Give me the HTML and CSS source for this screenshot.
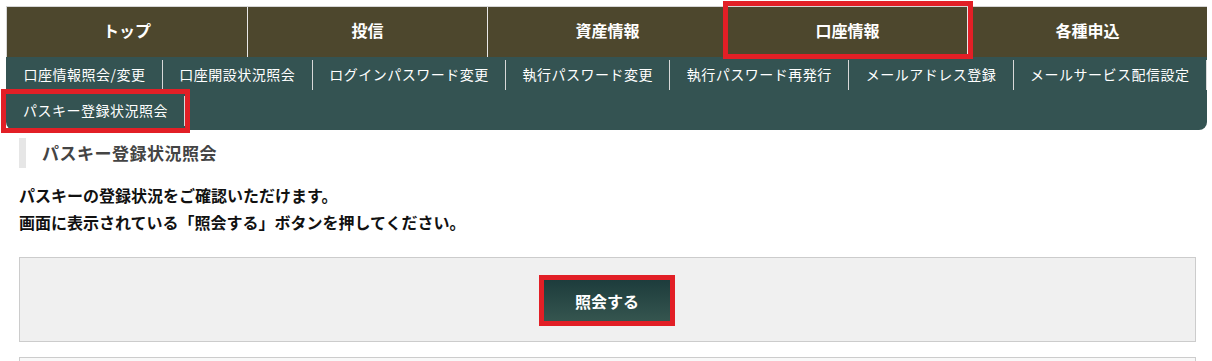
FILE: index.html
```html
<!DOCTYPE html>
<html lang="ja">
<head>
<meta charset="utf-8">
<title>パスキー登録状況照会</title>
<link rel="stylesheet" href="styles.css">
</head>
<body>
<div class="page">
  <nav class="gnav">
    <a class="gnav-item">トップ</a>
    <a class="gnav-item">投信</a>
    <a class="gnav-item">資産情報</a>
    <a class="gnav-item hl hl-gnav">口座情報</a>
    <a class="gnav-item">各種申込</a>
  </nav>
  <nav class="snav">
    <a class="snav-item snav-fill">口座情報照会/変更</a>
    <a class="snav-item snav-fill">口座開設状況照会</a>
    <a class="snav-item snav-fill">ログインパスワード変更</a>
    <a class="snav-item snav-fill">執行パスワード変更</a>
    <a class="snav-item snav-fill">執行パスワード再発行</a>
    <a class="snav-item snav-fill">メールアドレス登録</a>
    <a class="snav-item snav-fill">メールサービス配信設定</a>
    <a class="snav-item snav-last hl hl-snav">パスキー登録状況照会</a>
  </nav>
  <main class="content">
    <h2 class="heading">パスキー登録状況照会</h2>
    <p class="lead">パスキーの登録状況をご確認いただけます。<br>画面に表示されている「照会する」ボタンを押してください。</p>
    <div class="panel">
      <button class="btn hl hl-btn" type="button">照会する</button>
    </div>
    <div class="panel2"></div>
  </main>
</div>
</body>
</html>
```

FILE: styles.css
```css
* { box-sizing: border-box; }
html, body { margin: 0; padding: 0; background: #fff; }
body {
  font-family: "Noto Sans CJK JP", "Noto Sans", sans-serif;
  color: #111;
}
.page {
  width: 1201px;
  margin: 6px 0 0 6px;
}
.gnav {
  display: flex;
  background: #4d472d;
  border-top: 1px solid #d6d6d6;
  border-left: 1px solid #d6d6d6;
}
.gnav-item {
  width: 240px;
  height: 50px;
  line-height: 46px;
  padding-bottom: 4px;
  text-align: center;
  color: #fff;
  font-size: 16px;
  font-weight: 700;
}
.gnav-item + .gnav-item { border-left: 1px solid #e8e8e8; }
.snav {
  display: flex;
  flex-wrap: wrap;
  background: #345352;
  padding: 3px 0 4px 1px;
  border-radius: 0 0 8px 8px;
}
.snav-item {
  height: 30px;
  line-height: 29px;
  margin-bottom: 6px;
  padding: 0 16px;
  font-size: 14px;
  letter-spacing: 0.5px;
  color: #fff;
  border-right: 1px solid #d8d8d8;
  white-space: nowrap;
  text-align: center;
}
.snav-fill { flex-grow: 1; }
.snav-last { margin-bottom: 0; }
.hl { position: relative; }
.hl::after {
  content: "";
  position: absolute;
  border: 5px solid #e21f26;
  pointer-events: none;
}
.hl-gnav::after { top: -6px; bottom: -2px; left: -5px; right: -6px; }
.hl-snav::after { top: -7px; bottom: -7px; left: -6px; right: -6px; }
.hl-btn::after { top: -5px; bottom: -5px; left: -5px; right: -5px; }
.content {
  padding: 0 11px 0 13px;
}
.heading {
  margin: 8px 0 0;
  height: 30px;
  line-height: 29px;
  border-left: 7px solid #e6e6e6;
  padding-left: 16px;
  font-size: 17px;
  letter-spacing: 0.5px;
  font-weight: 700;
  color: #444;
}
.lead {
  margin: 14px 0 0;
  font-size: 16px;
  line-height: 27px;
  font-weight: 700;
  color: #111;
}
.panel {
  margin-top: 21px;
  border: 1px solid #cccccc;
  background: #f0f0f0;
  padding: 22px 0 20px;
  text-align: center;
}
.btn {
  display: inline-block;
  vertical-align: top;
  width: 127px;
  height: 41px;
  border: 0;
  border-right: 1px solid #d5d5d5;
  background: linear-gradient(#1d3c3c, #35554f);
  color: #fff;
  font-family: inherit;
  font-size: 16px;
  font-weight: 700;
  padding: 0;
}
.panel2 {
  margin-top: 15px;
  border: 1px solid #cccccc;
  background: #f8f8f8;
  height: 40px;
}
```
